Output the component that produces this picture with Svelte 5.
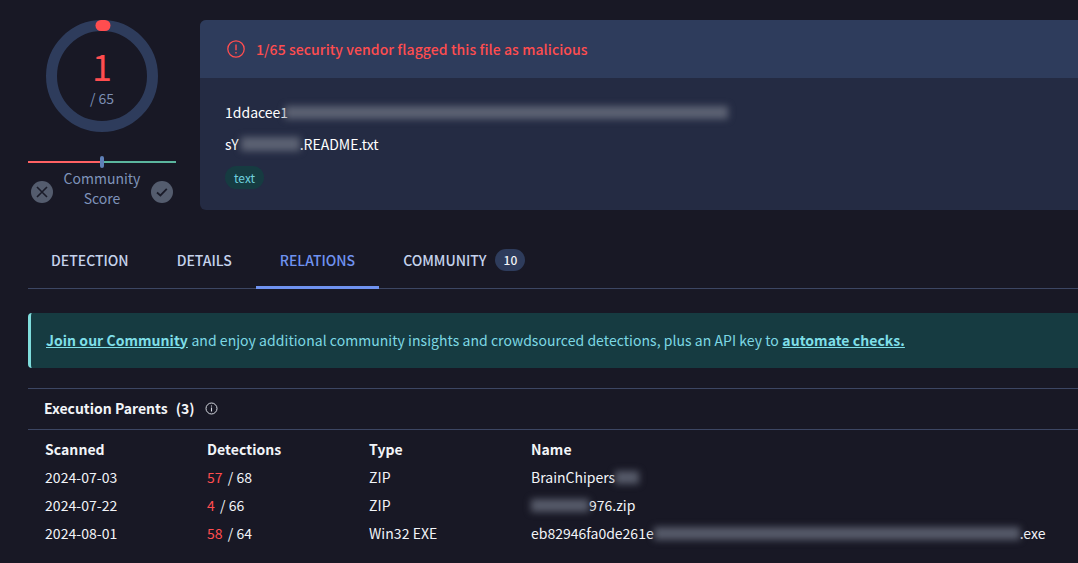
<script>
  const rows = [
    { date: '2024-07-03', hit: '57', total: '68', type: 'ZIP', name: [['t', 'BrainChipers'], ['b', 24]] },
    { date: '2024-07-22', hit: '4', total: '66', type: 'ZIP', name: [['b', 58], ['t', '976.zip']] },
    { date: '2024-08-01', hit: '58', total: '64', type: 'Win32 EXE', name: [['t', 'eb82946fa0de261e'], ['b', 366], ['t', '.exe']] }
  ];
</script>

<div class="page">
  <section class="top">
    <div class="score">
      <div class="ring">
        <svg width="112" height="112" viewBox="0 0 112 112">
          <circle cx="56" cy="56" r="50.5" fill="none" stroke="#2e3c5c" stroke-width="11" />
          <line x1="55" y1="5.5" x2="59" y2="5.5" stroke="#ff4d4f" stroke-width="11" stroke-linecap="round" />
        </svg>
        <div class="num">1</div>
        <div class="den">/ 65</div>
      </div>
      <div class="meter">
        <span class="red"></span><span class="green"></span><i class="knob"></i>
      </div>
      <div class="vote">
        <svg width="22" height="22" viewBox="0 0 22 22"><circle cx="11" cy="11" r="11" fill="#545c6e" /><path d="M6 6l10 10M16 6L6 16" stroke="#1a1b29" stroke-width="1.6" fill="none" /></svg>
        <div class="label">Community<br />Score</div>
        <svg width="22" height="22" viewBox="0 0 22 22"><circle cx="11" cy="11" r="11" fill="#545c6e" /><path d="M6 11.5l3.4 3 6.4-6.6" stroke="#1a1b29" stroke-width="1.8" fill="none" /></svg>
      </div>
    </div>

    <div class="card">
      <div class="card-head">
        <svg width="18" height="18" viewBox="0 0 18 18"><circle cx="9" cy="9" r="8.2" fill="none" stroke="#ff4d4f" stroke-width="1.3" /><path d="M9 4.4v5.8M9 12v1.6" stroke="#ff4d4f" stroke-width="1.4" fill="none" /></svg>
        <span>1/65 security vendor flagged this file as malicious</span>
      </div>
      <div class="card-body">
        <div class="line">1ddacee1<span class="blur hash"></span></div>
        <div class="line second">sY<span class="blur short"></span>.README.txt</div>
        <span class="tag">text</span>
      </div>
    </div>
  </section>

  <nav class="tabs">
    <a class="tab first" href="#d">DETECTION</a>
    <a class="tab" href="#d">DETAILS</a>
    <a class="tab active" href="#d">RELATIONS</a>
    <a class="tab" href="#d">COMMUNITY <b class="badge">10</b></a>
  </nav>

  <div class="banner">
    <a href="#j">Join our Community</a> and enjoy additional community insights and crowdsourced detections, plus an API key to <a href="#a">automate checks.</a>
  </div>

  <section class="relations">
    <h2>
      <span>Execution Parents</span><span class="count">(3)</span>
      <svg width="13" height="13" viewBox="0 0 13 13"><circle cx="6.5" cy="6.5" r="5.5" fill="none" stroke="#d5d8e0" stroke-width="1" /><path d="M6.5 5.6v3.8M6.5 3.4v1.2" stroke="#d5d8e0" stroke-width="1.1" fill="none" /></svg>
    </h2>
    <div class="grid">
      <div class="th">Scanned</div><div class="th">Detections</div><div class="th">Type</div><div class="th">Name</div>
      {#each rows as r}
        <div>{r.date}</div>
        <div><span class="hit">{r.hit}</span> <span class="tot">/ {r.total}</span></div>
        <div>{r.type}</div>
        <div class="name">
          {#each r.name as part}
            {#if part[0] === 't'}<span>{part[1]}</span>{:else}<span class="blur dark" style="width: {part[1]}px"></span>{/if}
          {/each}
        </div>
      {/each}
    </div>
  </section>
</div>

<style>
  :global(body) {
    margin: 0;
    background: #181825;
    overflow: hidden;
  }
  .page {
    width: 1078px;
    height: 563px;
    overflow: hidden;
    box-sizing: border-box;
    padding: 20px 0 0 28px;
    font-family: "Noto Sans CJK JP", "Noto Sans", sans-serif;
    font-size: 14px;
    color: #f2f4f8;
  }
  .top {
    display: flex;
    gap: 24px;
    height: 190px;
  }
  .score {
    width: 148px;
    flex: none;
    display: flex;
    flex-direction: column;
    align-items: center;
  }
  .ring {
    position: relative;
    width: 112px;
    height: 112px;
    text-align: center;
  }
  .ring svg {
    position: absolute;
    left: 0;
    top: 0;
  }
  .num {
    position: absolute;
    left: 0;
    right: 0;
    top: 23px;
    font-size: 36px;
    line-height: 44px;
    color: #ff4d4f;
  }
  .den {
    position: absolute;
    left: 0;
    right: 0;
    top: 68px;
    font-size: 14px;
    line-height: 20px;
    color: #7c8fb4;
  }
  .meter {
    position: relative;
    display: flex;
    width: 148px;
    margin-top: 29px;
    height: 2px;
  }
  .meter span {
    flex: 1;
  }
  .red { background: #ff6163; }
  .green { background: #5bb59e; }
  .knob {
    position: absolute;
    left: 72px;
    top: -5px;
    width: 4px;
    height: 12px;
    border-radius: 2px;
    background: #5f80b8;
  }
  .vote {
    display: flex;
    justify-content: space-between;
    align-items: flex-start;
    width: 142px;
    margin-top: 5px;
  }
  .vote svg {
    margin-top: 13px;
  }
  .label {
    font-size: 14px;
    line-height: 20px;
    color: #7f93ba;
    text-align: center;
  }
  .card {
    flex: 1;
    border-radius: 6px 0 0 6px;
    background: #242b43;
    overflow: hidden;
  }
  .card-head {
    height: 58px;
    display: flex;
    align-items: center;
    gap: 11px;
    padding-left: 27px;
    background: #2e3c5c;
    color: #ff4d4f;
    font-weight: 500;
    font-size: 14px;
    letter-spacing: 0.08px;
  }
  .card-body {
    padding: 24px 0 0 25px;
  }
  .line {
    display: flex;
    align-items: center;
    height: 20px;
    line-height: 20px;
    color: #fff;
  }
  .second {
    margin-top: 12px;
  }
  .blur {
    display: inline-block;
    filter: blur(3.5px);
    background: #5c6273;
  }
  .hash {
    width: 443px;
    height: 13px;
    margin-left: -3px;
  }
  .short {
    width: 59px;
    height: 14px;
    margin-left: 2px;
  }
  .tag {
    display: inline-block;
    margin-top: 12px;
    height: 23px;
    line-height: 23px;
    padding: 0 9px;
    border-radius: 12px;
    background: #163b41;
    color: #6fd0de;
    font-size: 12px;
  }
  .tabs {
    display: flex;
    align-items: stretch;
    height: 58px;
    margin-top: 20px;
    border-bottom: 1px solid #3c4663;
  }
  .tab {
    display: flex;
    align-items: center;
    height: 58px;
    box-sizing: border-box;
    padding: 2px 24px 0;
    font-weight: 500;
    font-size: 14px;
    color: #c5d2ec;
    text-decoration: none;
  }
  .first {
    padding-left: 23px;
  }
  .active {
    color: #6f92f0;
    border-bottom: 3px solid #6f92f0;
    padding-top: 4px;
    height: 59px;
    margin-bottom: -1px;
  }
  .badge {
    display: inline-block;
    margin-left: 9px;
    min-width: 30px;
    height: 22px;
    line-height: 22px;
    text-align: center;
    border-radius: 11px;
    background: #2e3c5c;
    color: #f2f4f8;
    font-size: 12px;
    font-weight: 500;
  }
  .banner {
    display: flex;
    gap: 0.25em;
    align-items: center;
    height: 55px;
    margin-top: 24px;
    box-sizing: border-box;
    padding: 0 0 2px 15px;
    border-left: 3px solid #7fdcdc;
    border-radius: 4px 0 0 4px;
    background: #163b41;
    color: #7dd8e4;
    white-space: nowrap;
    letter-spacing: 0.045px;
  }
  .banner a {
    color: #7fdfe8;
    font-weight: 700;
    text-decoration: underline;
  }
  .relations {
    margin-top: 20px;
  }
  h2 {
    display: flex;
    align-items: center;
    margin: 0;
    height: 40px;
    padding: 0 0 0 16px;
    border-top: 1px solid #3c4663;
    border-bottom: 1px solid #3c4663;
    font-size: 14px;
    font-weight: 700;
    color: #f2f4f8;
  }
  h2 span {
    position: relative;
    top: -1px;
  }
  .count { margin-left: 8px; }
  h2 svg { margin-left: 10px; position: relative; top: -1px; }
  .grid {
    display: grid;
    grid-template-columns: 162px 162px 162px 1fr;
    grid-auto-rows: 28px;
    padding: 5px 0 0 17px;
    line-height: 28px;
    color: #f2f4f8;
    letter-spacing: 0.05px;
  }
  .th {
    font-weight: 700;
  }
  .hit { color: #ff4d4f; }
  .tot { margin-left: 2px; }
  .name {
    display: flex;
    align-items: center;
    white-space: nowrap;
    letter-spacing: 0;
  }
  .dark {
    height: 13px;
    background: #565a69;
  }
</style>
